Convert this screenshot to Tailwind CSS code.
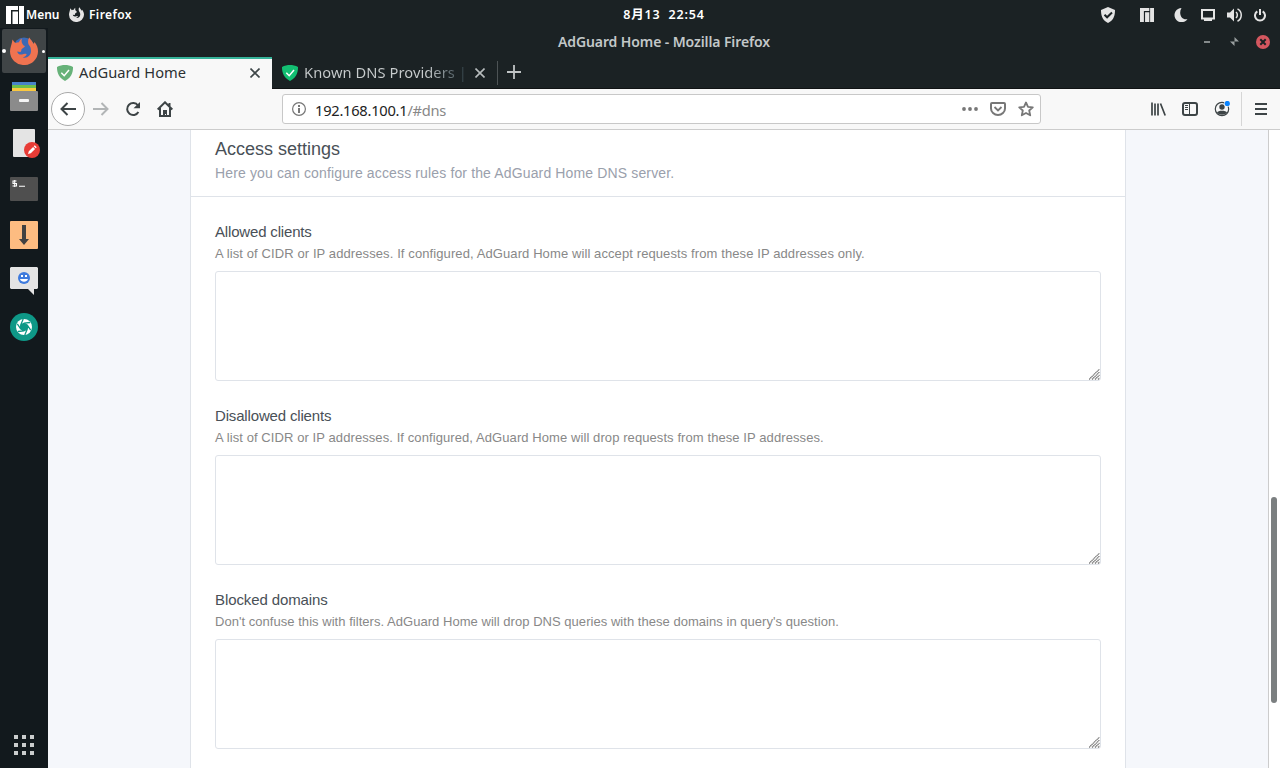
<!DOCTYPE html>
<html lang="en">
<head>
<meta charset="utf-8">
<title>AdGuard Home - Mozilla Firefox</title>
<script src="https://cdn.jsdelivr.net/npm/@tailwindcss/browser@4"></script>
</head>
<body class="w-[1280px] h-[768px] overflow-hidden bg-[#1b2224] flex flex-col font-['Noto_Sans','Noto_Sans_CJK_SC',sans-serif]">
<svg class="hidden">
  <symbol id="manjaro" viewBox="0 0 18 18"><path fill="currentColor" d="M0 0h12v4H5v14H0zM6.500 5.500H12V18H6.500zM13 0h5v18h-5z"/></symbol>
  <symbol id="shield" viewBox="0 0 16 16"><path d="M8 0C5.500 0 2.500.6 0 1.900 0 4.700 0 11.500 8 16 16 11.500 16 4.700 16 1.900 13.500.6 10.500 0 8 0z" fill="currentColor"/><path d="M4.300 7.700l2.900 3L12 5" fill="none" stroke="#fff" stroke-width="1.500"/></symbol>
  <symbol id="fox" viewBox="0 0 28 28"><path fill="currentColor" d="M2.500 2.500C3.500 4 4.300 5 5.300 6c1.200-.6 2.400-.8 3.700-.8C9.500 3.500 10.500 2.200 12 1.500c-.7 1.800-.6 3.700.4 5.200.5 1.200 1.300 2 2.600 2.300-.5 1.500-2.500 2-3.500 3.200-.2 1.300-.3 2.400-1.200 2.800L7.200 14.500c.3 2.200 2.300 3.500 4.800 3 1.700-.4 3-1.200 4.700-.3-.8 1.700-2 2.800-4 3.200 4.300 1.300 8.300-1.800 8.300-6.400 0-3-.8-4.500-2.300-6.200-1-2-.9-5 .5-7.300 1.300 2.300 3.300 3.800 4.500 6.500l.8-2C27 8 28 11 28 14.200A14 13.700 0 0 1 0 14.500C0 10.500 1.800 7.500 2.500 2.500z"/></symbol>
  <symbol id="grip" viewBox="0 0 11 11"><path d="M0 10.500L10.500 0M3 10.500L10.500 3M6 10.500L10.500 6M9 10.500l1.500-1.500" stroke="#757575" stroke-width="1.200" stroke-dasharray="1.400 .4"/></symbol>
</svg>

<header class="h-7 shrink-0 grid grid-cols-[1fr_84px_1fr] text-white text-[12px] font-semibold leading-7">
  <div class="flex items-center pl-1.5">
    <svg class="size-[18px]"><use href="#manjaro"/></svg>
    <span class="ml-[2px] w-[33px] pt-[1px] whitespace-nowrap">Menu</span>
    <svg class="size-[15px] ml-[10px]"><use href="#fox" class="text-[#e5e5e5]"/></svg>
    <span class="ml-[5px] pt-[1px] tracking-[.4px]">Firefox</span>
  </div>
  <div class="whitespace-pre text-center ml-6 -mr-6 pt-[1px] text-[12.500px] tracking-[.8px]">8月13  22:54</div>
  <div class="flex items-center justify-end pr-3 text-[#e4e4e4]">
    <svg class="size-4 mr-[24px]" viewBox="0 0 16 16"><path d="M8 0L1 3c0 5 1 10 7 13 6-3 7-8 7-13z" fill="currentColor"/><path d="M4.500 7.700l2.600 2.600L12 5.500" fill="none" stroke="#1b2224" stroke-width="2"/></svg>
    <svg class="size-[14px] mr-[20px]"><use href="#manjaro"/></svg>
    <svg class="size-[14px] mr-[13px]" viewBox="0 0 14 14"><path d="M7.500 0A7.100 7.100 0 1 0 13.500 11C8 12.500 4 6 7.500 0z" fill="currentColor"/></svg>
    <svg class="w-[14px] h-3 mr-3" viewBox="0 0 14 12"><path d="M1 1h12v8.500H1zM3 11h8" fill="none" stroke="currentColor" stroke-width="2"/></svg>
    <svg class="w-4 h-[14px] mr-[11px]" viewBox="0 0 16 14"><path d="M0 4.500h3L7 .5v13L3 9.500H0z" fill="currentColor"/><path d="M9 4c1.800 1.500 1.800 4.500 0 6M10.500.8c5 2.500 5 10 0 12.400" fill="none" stroke="currentColor" stroke-width="1.500"/></svg>
    <svg class="w-3 h-[14px] mr-[2px]" viewBox="0 0 12 14"><path d="M3.300 3.300a5 5 0 1 0 5.400 0M6 1v6" fill="none" stroke="currentColor" stroke-width="2"/></svg>
  </div>
</header>

<div class="flex-1 min-h-0 flex">
  <nav class="w-12 shrink-0 bg-[#12191d] flex flex-col items-center">
    <div class="w-11 h-11 mt-[1px] mb-[1px] rounded-[2px] bg-[#404547] flex items-center justify-between">
      <i class="block size-1 rounded-full bg-white"></i>
      <svg class="size-7" viewBox="0 0 28 28"><circle cx="14" cy="11" r="10.500" fill="#3b69b6"/><use href="#fox" class="text-[#ef7350]"/></svg>
      <i class="block size-[3px] mr-[1px] rounded-full bg-white"></i>
    </div>
    <div class="h-[46px] flex items-center"><svg class="size-[30px]" viewBox="0 0 30 30"><path fill="#4982c8" d="M3 0h24v4H3z"/><path fill="#6fbf4a" d="M3 3h24v4H3z"/><path fill="#fac840" d="M3 6h24v4H3z"/><rect x="1" y="9" width="28" height="20" rx="1" fill="#8b8b8b"/><rect x="10" y="17" width="10" height="3" rx="1" fill="#f4f4f4"/></svg></div>
    <div class="h-[46px] flex items-center"><svg class="w-8 h-[30px]" viewBox="0 0 32 30"><rect x="5" y="1" width="22" height="28" rx="1" fill="#e4e4e4"/><circle cx="24" cy="22" r="8" fill="#e83c36"/><path d="M20 26l.8-2.800 4.300-4.300 2 2-4.300 4.300zM25.700 18.300l1-1 2 2-1 1z" fill="#fff"/></svg></div>
    <div class="h-[46px] flex items-center"><svg class="w-7 h-6" viewBox="0 0 28 24"><rect width="28" height="24" rx="1" fill="#4f4f4f"/><path d="M6.500 4H3v2.500h3.500V9H2.500M4.700 3v7M9 9.300h6" fill="none" stroke="#fff" stroke-width="1.100"/></svg></div>
    <div class="h-[46px] flex items-center"><svg class="size-7" viewBox="0 0 28 28"><rect width="28" height="28" rx="1" fill="#fdbc81"/><path d="M12 4h4v14h3l-5 6-5-6h3z" fill="#414141"/></svg></div>
    <div class="h-[46px] flex items-center"><svg class="size-7" viewBox="0 0 28 28"><path d="M1 0h26l1 1v20l-1 1h-3v6l-6-6H1l-1-1V1z" fill="#e4e4e4"/><circle cx="14" cy="11" r="6" fill="#3f7bdd"/><path d="M11 8h2v2h-2zM15 8h2v2h-2z" fill="#fff"/><path d="M10 12c1 3.500 7 3.500 8 0z" fill="#fff"/></svg></div>
    <div class="h-[46px] flex items-center"><svg class="size-7" viewBox="0 0 28 28"><circle cx="14" cy="14" r="14" fill="#0e9887"/><circle cx="14" cy="14" r="8" fill="#fff"/><path d="M14 10.200l3.300 1.900v3.800L14 17.800l-3.300-1.900v-3.800zM14 10.200l6-.7M17.300 12.100l3.400 5M17.300 15.900l-2.500 6M14 17.800l-6 .7M10.700 15.900l-3.400-5M10.700 12.100l2.500-6" fill="#0e9887" stroke="#0e9887" stroke-width="1.300"/></svg></div>
    <div class="mt-auto mb-[13px] grid grid-cols-3 gap-1 text-[#cbcdce]">
      <i class="size-1 bg-current"></i><i class="size-1 bg-current"></i><i class="size-1 bg-current"></i><i class="size-1 bg-current"></i><i class="size-1 bg-current"></i><i class="size-1 bg-current"></i><i class="size-1 bg-current"></i><i class="size-1 bg-current"></i><i class="size-1 bg-current"></i>
    </div>
  </nav>

  <div class="flex-1 min-w-0 flex flex-col">
    <div class="h-[29px] shrink-0 grid grid-cols-[1fr_auto_1fr] items-center pb-[2px] text-[#c3c8c9]">
      <div></div>
      <div class="text-[14px] leading-[26px] tracking-[-.1px] font-semibold whitespace-nowrap">AdGuard Home - Mozilla Firefox</div>
      <div class="flex justify-end items-center pr-[10px]">
        <i class="w-[6px] h-[2px] bg-[#858b8c] mr-[20px]"></i>
        <svg class="size-[9px] mr-[17px]" viewBox="0 0 9 9"><path d="M4.500 0v4.500H9zM0 4.500h4.500V9z" fill="#9a9fa0"/></svg>
        <svg class="size-[14px]" viewBox="0 0 14 14"><circle cx="7" cy="7" r="7" fill="#d4575f"/><path d="M4.300 4.300l5.400 5.400M9.700 4.300L4.300 9.700" stroke="#1b2224" stroke-width="2"/></svg>
      </div>
    </div>

    <div class="h-8 shrink-0 flex text-[14.670px] border-b border-[#101314]">
      <div class="w-56 h-8 bg-[#f8f8f8] border-t-2 border-[#36b399] flex items-center pl-[9px] pb-[2px] text-[#2c3032]">
        <svg class="size-4 text-[#67b279]"><use href="#shield"/></svg>
        <span class="ml-[6px] pb-[2px] leading-[26px] tracking-[.04px] whitespace-nowrap">AdGuard Home</span>
        <svg class="size-[10px] ml-auto mr-3" viewBox="0 0 10 10"><path d="M.5.5l9 9M9.500.5l-9 9" stroke="#3e4648" stroke-width="1.600"/></svg>
      </div>
      <div class="w-[225px] flex items-center pl-[10px] text-[#d0d4d5]">
        <svg class="size-4 text-[#13bf72]"><use href="#shield"/></svg>
        <span class="ml-[6px] w-[163px] pb-[2px] whitespace-nowrap leading-[28px] tracking-[.07px] bg-linear-to-r from-[#c9cdce] from-75% to-[#2b3b42] bg-clip-text text-transparent">Known DNS Providers |</span>
        <svg class="size-[10px] ml-[8px]" viewBox="0 0 10 10"><path d="M.5.5l9 9M9.500.5l-9 9" stroke="#b7bcbd" stroke-width="1.600"/></svg>
      </div>
      <i class="w-px h-6 mt-1 bg-[#4d5355]"></i>
      <svg class="size-[14px] ml-[9px] mt-2" viewBox="0 0 14 14"><path d="M7 0v14M0 7h14" stroke="#c0c4c5" stroke-width="1.800"/></svg>
    </div>

    <div class="h-[41px] shrink-0 bg-[#f8f8f8] border-b border-[#ccc] flex items-center text-[#3d4446]">
      <div class="ml-[3px] size-[34px] rounded-full border border-[#aaa] bg-white flex items-center justify-center"><svg class="w-4 h-[14px]" viewBox="0 0 16 14"><path d="M7.500 1L1.500 7l6 6M1.500 7H16" fill="none" stroke="currentColor" stroke-width="2"/></svg></div>
      <svg class="w-4 h-[14px] ml-[8px]" viewBox="0 0 16 14"><path d="M8.500 1l6 6-6 6M14.500 7H0" fill="none" stroke="#b2b5b6" stroke-width="2"/></svg>
      <svg class="size-4 ml-4" viewBox="0 0 16 16"><path d="M13 4.500A6 6 0 1 0 13.400 11" fill="none" stroke="currentColor" stroke-width="2"/><path d="M15 1v6.300H8.500z" fill="currentColor"/></svg>
      <svg class="size-4 ml-4" viewBox="0 0 16 16"><path d="M.7 8.500L8 1.300l7.300 7.200M3 7v8h10V7M12.500 2v4" fill="none" stroke="currentColor" stroke-width="2"/><path d="M6 9h4v6H9v-2H8v2H6z" fill="currentColor"/></svg>
      <div class="ml-[109px] w-[759px] h-[30px] rounded-[3px] border border-[#c8c8c8] bg-white flex items-center text-[#777]">
        <svg class="size-[14px] ml-[9px]" viewBox="0 0 14 14"><circle cx="7" cy="7" r="6.400" fill="none" stroke="currentColor" stroke-width="1.200"/><path d="M6 3h2v2H6zM6 6h2v5H6z" fill="currentColor"/></svg>
        <span class="ml-[9px] pt-[1px] text-[14.670px] leading-7 tracking-[-.25px] text-[#888]"><span class="text-[#222]">192.168.100.1</span>/#dns</span>
        <svg class="w-4 h-1 ml-auto" viewBox="0 0 16 4"><circle cx="2" cy="2" r="1.900" fill="currentColor"/><circle cx="8" cy="2" r="1.900" fill="currentColor"/><circle cx="14" cy="2" r="1.900" fill="currentColor"/></svg>
        <svg class="w-4 h-[14px] ml-3" viewBox="0 0 16 14"><path d="M2 1h12a1 1 0 0 1 1 1v4.500a7 6.500 0 0 1-14 0V2a1 1 0 0 1 1-1z" fill="none" stroke="currentColor" stroke-width="2"/><path d="M4.500 5L8 8.500 11.500 5" fill="none" stroke="currentColor" stroke-width="1.800"/></svg>
        <svg class="size-4 ml-3 mr-[6px]" viewBox="0 0 16 16"><path d="M8 1.500l2 4.300 4.800.5-3.600 3.200 1 4.800L8 12l-4.200 2.300 1-4.800L1.200 6.300 6 5.800z" fill="none" stroke="currentColor" stroke-width="1.800" stroke-linejoin="round"/></svg>
      </div>
      <svg class="w-4 h-[14px] ml-auto" viewBox="0 0 16 14"><path d="M2 .5v13M5 1.500v12M8 1.500v12M10.500 1.500l4.700 12" fill="none" stroke="currentColor" stroke-width="1.700"/></svg>
      <svg class="w-4 h-[14px] ml-4" viewBox="0 0 16 14"><rect x="1" y="1" width="14" height="12" rx="2" fill="none" stroke="currentColor" stroke-width="2"/><path d="M7.500 2v10M3 3.500h3M3 5.500h3M3 7.500h3" stroke="currentColor" stroke-width="1"/></svg>
      <svg class="size-4 ml-4" viewBox="0 0 16 16"><circle cx="8" cy="8" r="6.700" fill="none" stroke="currentColor" stroke-width="1.200"/><circle cx="8" cy="6" r="2.700" fill="currentColor"/><path d="M3 11.500c1-2.500 9-2.500 10 0-2 3-8 3-10 0z" fill="currentColor"/><circle cx="13.300" cy="2.500" r="3.200" fill="#f8f8f8"/><circle cx="13.300" cy="2.500" r="2.600" fill="#0a84ff"/></svg>
      <i class="w-px h-[34px] ml-[11px] bg-[#d6d6d6]"></i>
      <svg class="w-3 h-3 ml-[13px] mr-[13px]" viewBox="0 0 12 12"><path d="M0 1h12M0 6h12M0 11h12" stroke="currentColor" stroke-width="2"/></svg>
    </div>

    <div class="flex-1 min-h-0 flex bg-[#f5f7fb]">
      <main class="ml-[142px] w-[936px] bg-white border-x border-[#dfe3e9] font-['Liberation_Sans',Arial,sans-serif]">
        <div class="h-[67px] px-6 pt-2 border-b border-[#dfe3e9]">
          <h1 class="text-[18px] leading-[22px] text-[#495057]">Access settings</h1>
          <p class="text-[14px] leading-[20px] mt-[3px] text-[#9aa0ac] tracking-[.14px]">Here you can configure access rules for the AdGuard Home DNS server.</p>
        </div>
        <form class="px-6 pt-[25px]">
          <section class="h-[184px]">
            <label class="block text-[15px] leading-5 tracking-[-.17px] text-[#495057]">Allowed clients</label>
            <p class="text-[13px] leading-5 mt-[2px] mb-[7px] tracking-[.1px] text-[#888]">A list of CIDR or IP addresses. If configured, AdGuard Home will accept requests from these IP addresses only.</p>
            <div class="h-[110px] border border-[#dfe3e9] rounded-[3px] flex items-end justify-end"><svg class="size-[11px]"><use href="#grip"/></svg></div>
          </section>
          <section class="h-[184px]">
            <label class="block text-[15px] leading-5 tracking-[-.16px] text-[#495057]">Disallowed clients</label>
            <p class="text-[13px] leading-5 mt-[2px] mb-[7px] tracking-[.085px] text-[#888]">A list of CIDR or IP addresses. If configured, AdGuard Home will drop requests from these IP addresses.</p>
            <div class="h-[110px] border border-[#dfe3e9] rounded-[3px] flex items-end justify-end"><svg class="size-[11px]"><use href="#grip"/></svg></div>
          </section>
          <section class="h-[160px]">
            <label class="block text-[15px] leading-5 tracking-[-.1px] text-[#495057]">Blocked domains</label>
            <p class="text-[13px] leading-5 mt-[2px] mb-[7px] tracking-[.037px] text-[#888]">Don't confuse this with filters. AdGuard Home will drop DNS queries with these domains in query's question.</p>
            <div class="h-[110px] border border-[#dfe3e9] rounded-[3px] flex items-end justify-end"><svg class="size-[11px]"><use href="#grip"/></svg></div>
          </section>
        </form>
      </main>
      <div class="ml-auto w-3 bg-white border-l border-[#ccc] pl-[2px] pt-[367px]"><div class="w-[6px] h-[206px] rounded-full bg-[#7b7f80]"></div></div>
    </div>
  </div>
</div>
</body>
</html>
